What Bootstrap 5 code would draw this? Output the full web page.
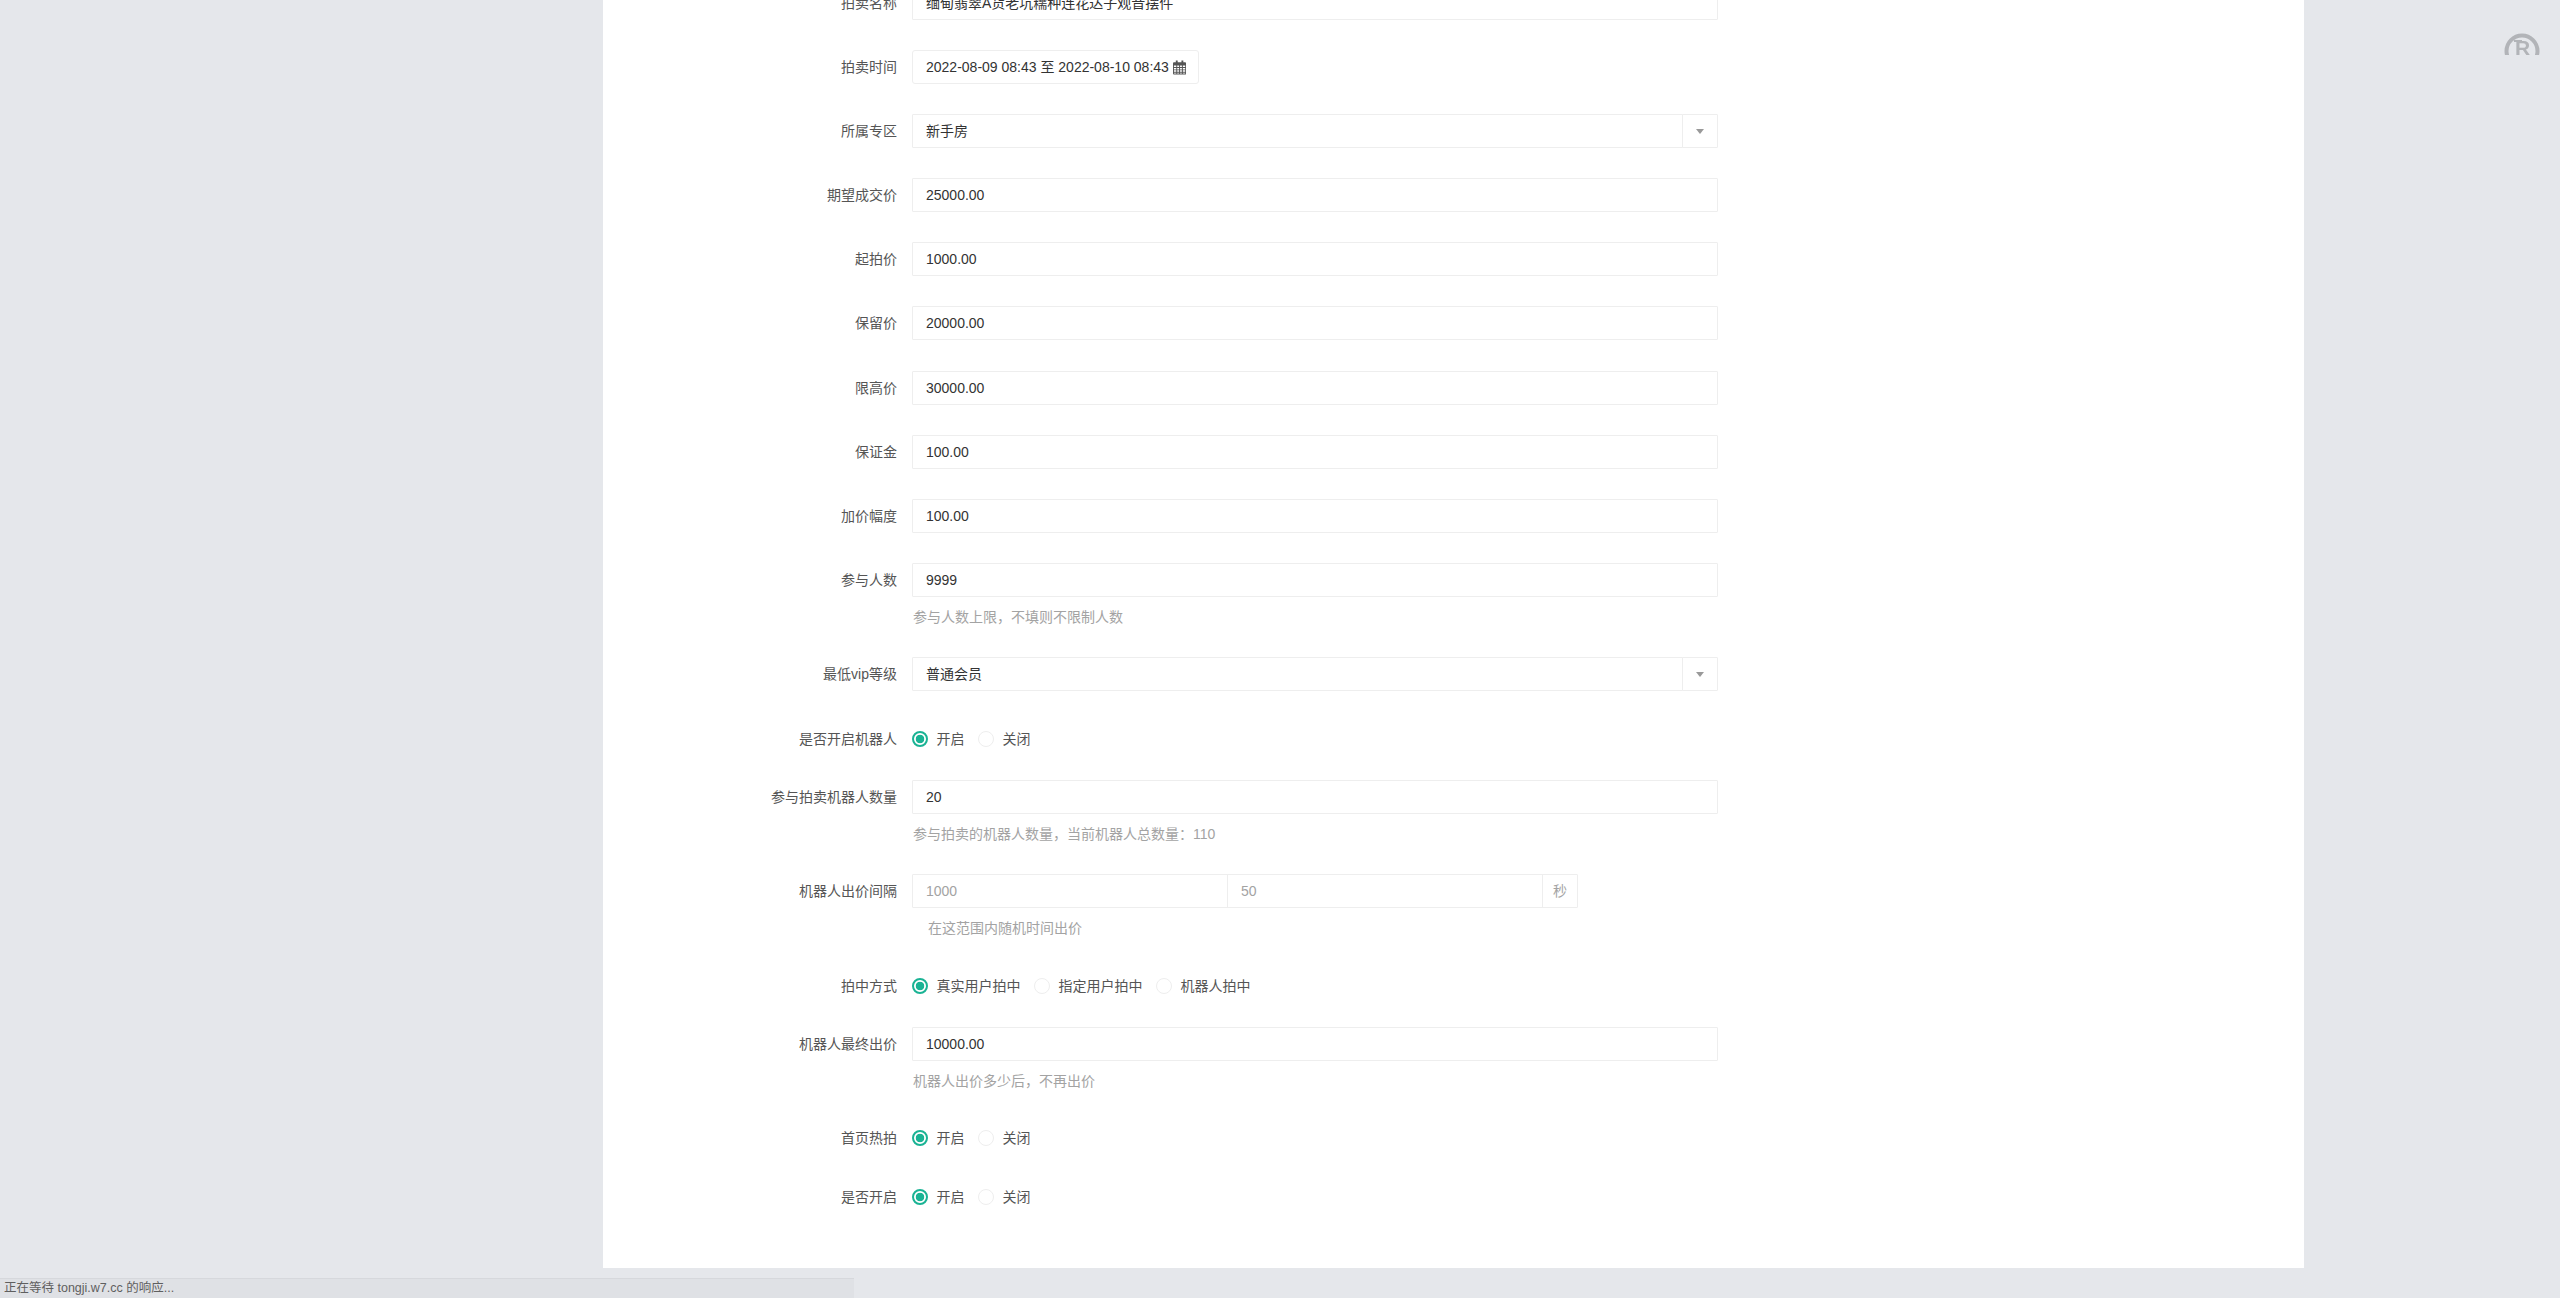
<!doctype html>
<html lang="zh-CN">
<head>
<meta charset="utf-8">
<title>拍卖</title>
<link href="https://cdn.jsdelivr.net/npm/bootstrap@5.3.0/dist/css/bootstrap.min.css" rel="stylesheet">
<style>
html,body{height:100%;}
body{background:#e5e7eb;overflow:hidden;font-family:"Liberation Sans","Noto Sans CJK SC",sans-serif;font-size:14px;color:#555;}
.sheet{width:1701px;margin-left:603px;height:1268px;background:#fff;overflow:hidden;}
.sheet-form{margin-top:-14px;padding-bottom:29px;}
.frow{margin-bottom:30.1px;}
.frow-tight{margin-bottom:28.6px;}
.flabel{width:294px;flex:none;text-align:right;line-height:34px;padding:0;margin:0;color:#555;}
.fbody{width:806px;flex:none;margin-left:15px;}
.form-control.fc,.cell{height:34px;font-size:14px;line-height:20px;padding:6px 12px 6px 13px;border:1px solid #eeeeee;border-radius:1px;color:#333;background:#fff;box-shadow:none;}
.form-control.fc::placeholder{color:#a3a3a3;opacity:1;}
.form-control.cjk-val{padding-top:5px;padding-bottom:7px;}
.date-box{display:inline-flex;align-items:center;gap:4px;border-radius:3px;width:287px;white-space:nowrap;}
.caret-box{width:36px;justify-content:center;padding:0;background:#fff;border:1px solid #eeeeee;border-radius:1px;}
.tri{width:0;height:0;margin-top:1px;border-left:4.5px solid transparent;border-right:4.5px solid transparent;border-top:5px solid #999;}
.sec-box{width:36px;justify-content:center;padding:0;background:#fff;border:1px solid #eeeeee;border-radius:1px;color:#a3a3a3;font-size:14px;}
.range-group{width:666px;}
.range-group .fc{flex:none;width:316px;}
.hint{margin-top:9px;margin-bottom:-1px;line-height:22px;color:#a3a3a3;padding-left:1px;}
.hint-in{padding-left:16px;}
.radio-row{height:29px;margin-bottom:30.1px;}
.radio-row .flabel{line-height:36px;}
.radios{padding-top:7px;height:29px;display:flex;align-items:center;gap:13.500px;color:#555;}
.ropt{display:inline-flex;align-items:center;gap:8.500px;margin:0;padding:0;min-height:0;line-height:22px;}
.ropt .form-check-input{appearance:none;width:16px;height:16px;margin:0;float:none;border:1px solid #eeeeee;border-radius:50%;background:#fff;}
.ropt .form-check-input:checked{border:2px solid #1ab394;background:radial-gradient(circle,#1ab394 0 4px,#fff 4.6px);}
.ropt .form-check-input:focus{box-shadow:none;}
.reg-mark{position:fixed;left:2504px;top:33px;width:36px;height:22px;}
.reg-mark text{font-family:"Liberation Sans",sans-serif;font-weight:700;font-size:21px;fill:#b2b4b8;}
.load-bar{position:fixed;left:0;bottom:0;width:854px;height:20px;background:#dfe1e5;border-top:1px solid #d6d8dc;font-size:12.500px;line-height:19px;padding-left:4px;color:#5f5f5f;white-space:nowrap;}
</style>
</head>
<body>
<main class="sheet">
<form class="sheet-form">
  <div class="frow d-flex"><label class="flabel">拍卖名称</label><div class="fbody"><input class="form-control fc cjk-val" value="缅甸翡翠A货老坑糯种连花达子观音摆件"></div></div>
  <div class="frow d-flex"><label class="flabel">拍卖时间</label><div class="fbody"><div class="cell date-box"><span>2022-08-09 08:43 至 2022-08-10 08:43</span>
    <svg width="14" height="15" viewBox="0 0 14 15" aria-hidden="true"><path fill="#555" fill-rule="evenodd" d="M3 0h2v2h4V0h2v2h2a1 1 0 0 1 1 1v11a1 1 0 0 1-1 1H1a1 1 0 0 1-1-1V3a1 1 0 0 1 1-1h2zM1 5.500V7h2.500V5.500zm3.500 0V7h2V5.500zm3 0V7h2V5.500zm3 0V7H13V5.500zM1 8v1.500h2.500V8zm3.500 0v1.500h2V8zm3 0v1.500h2V8zm3 0v1.500H13V8zM1 10.500V12h2.500v-1.500zm3.500 0V12h2v-1.500zm3 0V12h2v-1.500zm3 0V12H13v-1.500zM1 13v1h2.500v-1zm3.500 0v1h2v-1zm3 0v1h2v-1zm3 0v1H13v-1z"/></svg></div></div></div>
  <div class="frow d-flex"><label class="flabel">所属专区</label><div class="fbody input-group"><input class="form-control fc cjk-val" readonly value="新手房"><span class="input-group-text caret-box"><i class="tri"></i></span></div></div>
  <div class="frow d-flex"><label class="flabel">期望成交价</label><div class="fbody"><input class="form-control fc" value="25000.00"></div></div>
  <div class="frow d-flex"><label class="flabel">起拍价</label><div class="fbody"><input class="form-control fc" value="1000.00"></div></div>
  <div class="frow d-flex"><label class="flabel">保留价</label><div class="fbody"><input class="form-control fc" value="20000.00"></div></div>
  <div class="frow d-flex"><label class="flabel">限高价</label><div class="fbody"><input class="form-control fc" value="30000.00"></div></div>
  <div class="frow d-flex"><label class="flabel">保证金</label><div class="fbody"><input class="form-control fc" value="100.00"></div></div>
  <div class="frow d-flex"><label class="flabel">加价幅度</label><div class="fbody"><input class="form-control fc" value="100.00"></div></div>
  <div class="frow d-flex"><label class="flabel">参与人数</label><div class="fbody"><input class="form-control fc" value="9999"><div class="hint">参与人数上限，不填则不限制人数</div></div></div>
  <div class="frow d-flex"><label class="flabel">最低vip等级</label><div class="fbody input-group"><input class="form-control fc cjk-val" readonly value="普通会员"><span class="input-group-text caret-box"><i class="tri"></i></span></div></div>
  <div class="radio-row d-flex"><label class="flabel">是否开启机器人</label><div class="fbody radios">
    <label class="form-check ropt"><input class="form-check-input" type="radio" name="r1" checked>开启</label>
    <label class="form-check ropt"><input class="form-check-input" type="radio" name="r1">关闭</label></div></div>
  <div class="frow d-flex"><label class="flabel">参与拍卖机器人数量</label><div class="fbody"><input class="form-control fc" value="20"><div class="hint">参与拍卖的机器人数量，当前机器人总数量：110</div></div></div>
  <div class="frow d-flex"><label class="flabel">机器人出价间隔</label><div class="fbody"><div class="input-group range-group"><input class="form-control fc" placeholder="1000"><input class="form-control fc" placeholder="50"><span class="input-group-text sec-box">秒</span></div><div class="hint hint-in">在这范围内随机时间出价</div></div></div>
  <div class="radio-row d-flex"><label class="flabel">拍中方式</label><div class="fbody radios">
    <label class="form-check ropt"><input class="form-check-input" type="radio" name="r2" checked>真实用户拍中</label>
    <label class="form-check ropt"><input class="form-check-input" type="radio" name="r2">指定用户拍中</label>
    <label class="form-check ropt"><input class="form-check-input" type="radio" name="r2">机器人拍中</label></div></div>
  <div class="frow frow-tight d-flex"><label class="flabel">机器人最终出价</label><div class="fbody"><input class="form-control fc" value="10000.00"><div class="hint">机器人出价多少后，不再出价</div></div></div>
  <div class="radio-row d-flex"><label class="flabel">首页热拍</label><div class="fbody radios">
    <label class="form-check ropt"><input class="form-check-input" type="radio" name="r3" checked>开启</label>
    <label class="form-check ropt"><input class="form-check-input" type="radio" name="r3">关闭</label></div></div>
  <div class="radio-row d-flex"><label class="flabel">是否开启</label><div class="fbody radios">
    <label class="form-check ropt"><input class="form-check-input" type="radio" name="r4" checked>开启</label>
    <label class="form-check ropt"><input class="form-check-input" type="radio" name="r4">关闭</label></div></div>
</form>
</main>
<svg class="reg-mark" viewBox="0 0 36 22" aria-hidden="true"><circle cx="18" cy="18" r="15.500" fill="none" stroke="#b2b4b8" stroke-width="4"/><path d="M10 8h8" stroke="#b2b4b8" stroke-width="2"/><text x="11" y="22">R</text></svg>
<div class="load-bar">正在等待 tongji.w7.cc 的响应...</div>
<script src="https://cdn.jsdelivr.net/npm/bootstrap@5.3.0/dist/js/bootstrap.bundle.min.js"></script>
</body>
</html>
